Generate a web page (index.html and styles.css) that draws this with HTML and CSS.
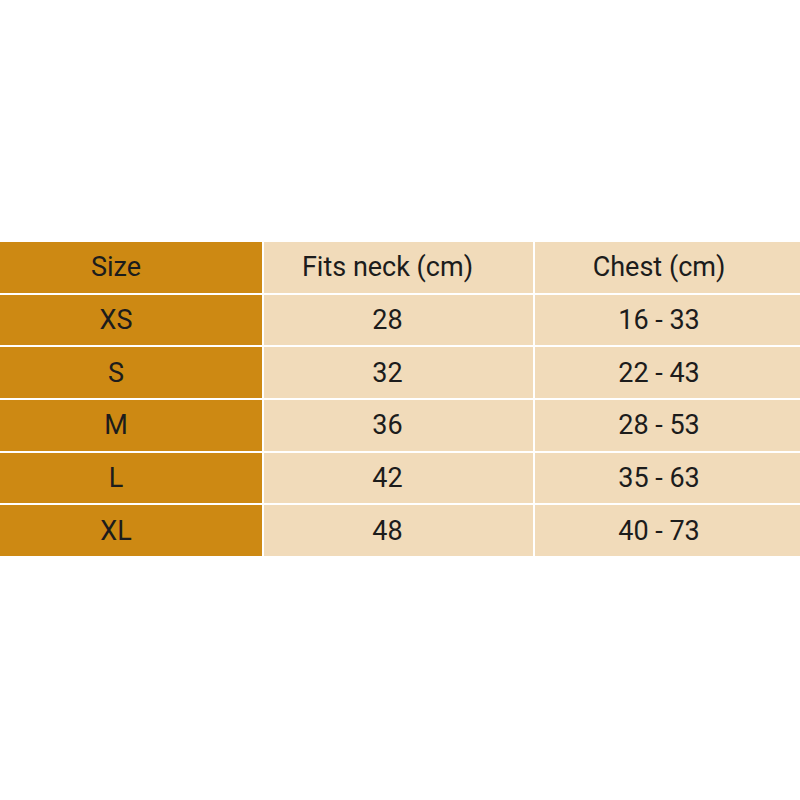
FILE: index.html
```html
<!DOCTYPE html>
<html>
<head>
<meta charset="utf-8">
<link rel="stylesheet" href="styles.css">
</head>
<body>
<div class="page">
  <div class="size-table">
    <div class="cell c1">Size</div><div class="cell c2">Fits neck (cm)</div><div class="cell c3">Chest (cm)</div>
    <div class="cell c1">XS</div><div class="cell c2">28</div><div class="cell c3">16 - 33</div>
    <div class="cell c1">S</div><div class="cell c2">32</div><div class="cell c3">22 - 43</div>
    <div class="cell c1">M</div><div class="cell c2">36</div><div class="cell c3">28 - 53</div>
    <div class="cell c1">L</div><div class="cell c2">42</div><div class="cell c3">35 - 63</div>
    <div class="cell c1">XL</div><div class="cell c2">48</div><div class="cell c3">40 - 73</div>
  </div>
</div>
</body>
</html>
```

FILE: styles.css
```css
html, body {
  margin: 0;
  padding: 0;
  background: #ffffff;
}
.page {
  width: 800px;
  height: 800px;
  padding-top: 242px;
  box-sizing: border-box;
}
.size-table {
  display: grid;
  grid-template-columns: 262px 269px 266px;
  grid-template-rows: repeat(6, 50.67px);
  column-gap: 2px;
  row-gap: 2px;
  font-family: Roboto, "Liberation Sans", sans-serif;
  font-size: 27px;
  color: #1c1c1c;
}
.cell {
  display: flex;
  align-items: center;
  justify-content: center;
  background: #f1dbba;
}
.c1 {
  background: #cd8913;
  padding-right: 30px;
}
.c2 {
  padding-right: 22px;
}
.c3 {
  padding-right: 18px;
}
```
